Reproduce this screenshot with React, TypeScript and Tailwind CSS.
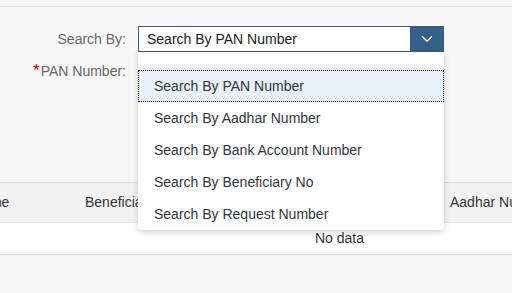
import { ChevronDown } from "lucide-react"

const options = [
  "Search By PAN Number",
  "Search By Aadhar Number",
  "Search By Bank Account Number",
  "Search By Beneficiary No",
  "Search By Request Number",
]

export default function App() {
  return (
    <div className="relative h-[293px] w-[512px] overflow-hidden bg-[#f7f7f7] font-['Liberation_Sans',Arial,sans-serif] text-[14px]">
      <div className="h-[7px] border-b border-[#d9d9d9]" />

      {/* form */}
      <div className="h-[175px] pt-[19px]">
        <div className="flex h-[26px] items-center">
          <label className="w-[126px] text-right text-[#666666]">Search By:</label>
          <div className="ml-[12px] flex h-[26px] w-[306px] items-stretch border border-[#3f5a75] bg-white">
            <span className="flex flex-1 items-center pl-[8px] text-[#1a1a1a]">Search By PAN Number</span>
            <span className="flex w-[33px] items-center justify-center bg-[#356089]">
              <ChevronDown className="h-[18px] w-[18px] text-white" strokeWidth={1.5} />
            </span>
          </div>
        </div>
        <div className="mt-[6px] flex h-[26px] items-center">
          <label className="w-[126px] text-right text-[#666666]">
            <span className="mr-[1px] text-[17px] text-[#bb0000]">*</span>PAN Number:
          </label>
        </div>
      </div>

      {/* table */}
      <div className="border-t border-[#d9d9d9]">
        <div className="flex h-[40px] items-center whitespace-nowrap border-b border-[#e5e5e5] bg-[#f2f2f2] text-[#333333]">
          <span className="ml-[-28px] w-[113px] shrink-0">Name</span>
          <span className="w-[365px] shrink-0">Beneficiary Name</span>
          <span className="shrink-0">Aadhar Number</span>
        </div>
        <div className="flex h-[32px] items-center border-b border-[#d9d9d9] bg-white pl-[315px] text-[#333333]">
          No data
        </div>
      </div>

      {/* dropdown list */}
      <ul className="absolute left-[138px] top-[52px] w-[306px] rounded-b-[4px] bg-white pt-[18px] shadow-[0_2px_6px_rgba(0,0,0,0.18)]">
        {options.map((o, i) => (
          <li
            key={o}
            className={
              i === 0
                ? "flex h-[32px] items-center bg-[#e8f0f9] pl-[16px] text-[#32363a] outline-1 outline-offset-[-1px] outline-dotted outline-black"
                : "flex h-[32px] items-center pl-[16px] text-[#32363a]"
            }
          >
            {o}
          </li>
        ))}
      </ul>
    </div>
  )
}
